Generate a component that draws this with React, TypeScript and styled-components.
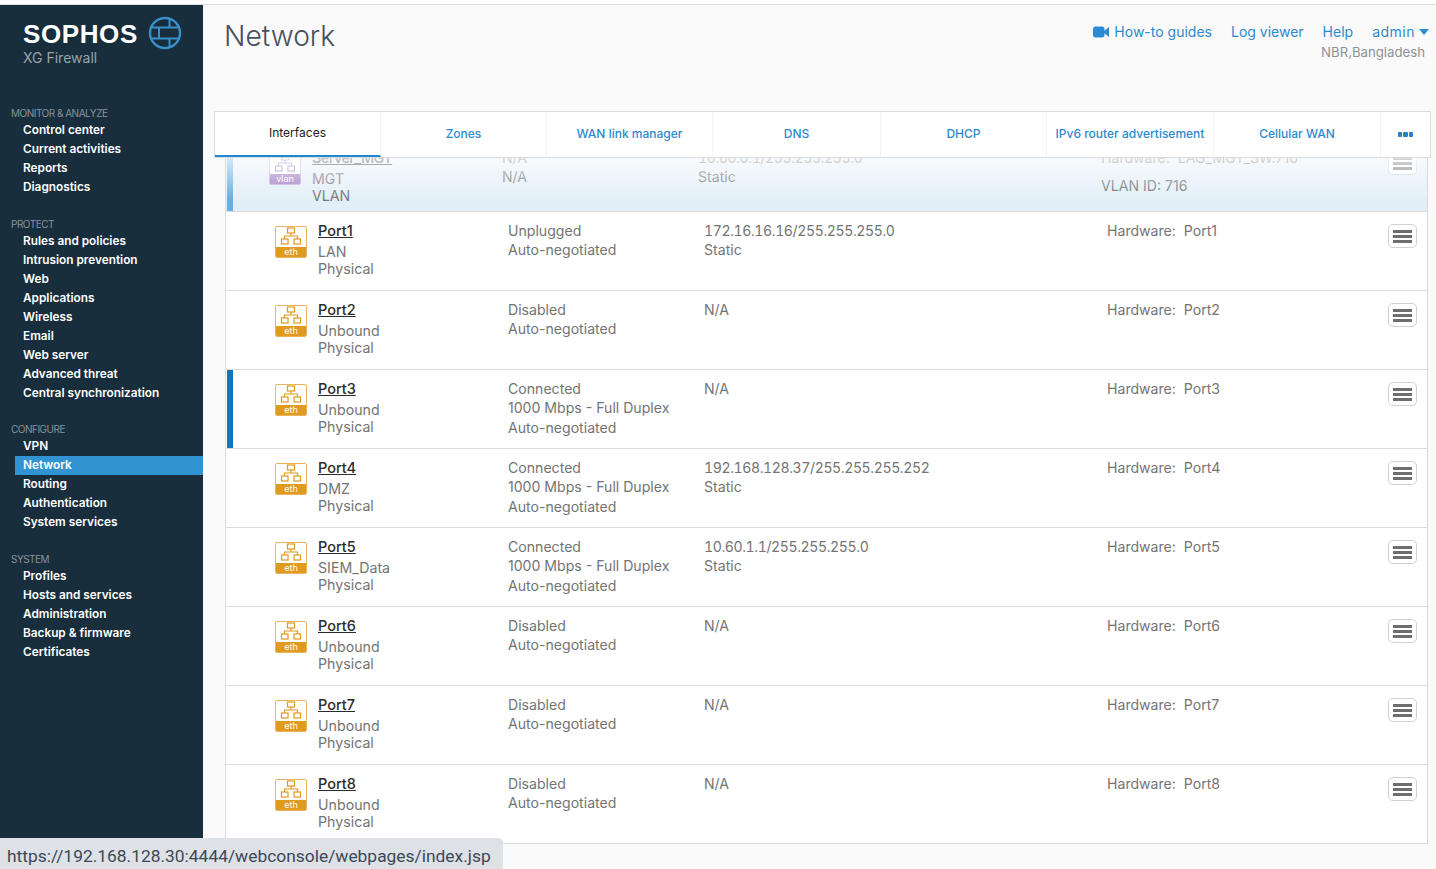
import React from 'react';
import styled, { createGlobalStyle } from 'styled-components';

const GlobalStyle = createGlobalStyle`
  html, body {
    margin: 0;
    padding: 0;
    height: 100%;
    overflow: hidden;
    background: #fff;
    font-family: Inter, "Noto Sans", sans-serif;
  }
  * { box-sizing: border-box; }
`;

const Page = styled.div`
  width: 1436px;
  height: 869px;
  padding-top: 4px;
  position: relative;
  overflow: hidden;
`;

const Shell = styled.div`
  display: flex;
  height: 865px;
  border-top: 1px solid #dcdfe2;
`;

const Sidebar = styled.nav`
  width: 203px;
  flex: none;
  background: #182e3d;
  color: #fff;
`;

const Brand = styled.div`
  height: 100px;
  padding: 10px 0 0 23px;
`;

const BrandRow = styled.div`
  display: flex;
  align-items: center;
  gap: 10px;
  height: 36px;
`;

const BrandName = styled.span`
  font-family: "Liberation Sans", sans-serif;
  font-weight: 700;
  font-size: 26px;
  letter-spacing: 0.6px;
  width: 115px;
  margin-top: 2px;
`;

const BrandSub = styled.div`
  font-size: 14px;
  color: #99a3aa;
  margin-top: -2px;
`;

const Group = styled.div`
  margin-bottom: 18.67px;
`;

const GroupLabel = styled.div`
  font-size: 10px;
  letter-spacing: -0.5px;
  line-height: 15px;
  padding-top: 1px;
  color: #88939a;
  padding-left: 11px;
  text-transform: uppercase;
`;

const NavItem = styled.div<{ $active?: boolean }>`
  margin-left: 15px;
  padding-left: 8px;
  height: 19px;
  line-height: 19px;
  font-size: 11.8px;
  font-weight: 600;
  white-space: nowrap;
  background: ${(p) => (p.$active ? '#3293d2' : 'transparent')};
`;

const Main = styled.main`
  flex: 1;
  min-width: 0;
  background: #fafafa;
  padding: 0 5px 0 11px;
`;

const Header = styled.header`
  height: 106px;
  display: flex;
  justify-content: space-between;
  padding: 12px 0 0 10px;
`;

const Title = styled.h1`
  margin: 0;
  font-size: 28.2px;
  font-weight: 300;
  line-height: 38px;
  color: #46525c;
`;

const HeaderSide = styled.div`
  display: flex;
  flex-direction: column;
  align-items: flex-end;
  padding: 5px 2px 0 0;
`;

const Links = styled.div`
  display: flex;
  align-items: center;
  gap: 19px;
  font-size: 14px;
  line-height: 20px;
  color: #2b8ad0;
`;

const LinkWithIcon = styled.span`
  display: inline-flex;
  align-items: center;
  gap: 4px;
`;

const AdminName = styled.span`
  letter-spacing: 0.5px;
`;

const Place = styled.div`
  font-size: 13.2px;
  line-height: 18px;
  color: #8a9299;
  margin: 1px 4px 0 0;
`;

const Tabs = styled.div`
  position: relative;
  z-index: 2;
  display: grid;
  grid-template-columns: 166px 166px 166px 168px 166px 167px 167px 1fr;
  height: 47px;
  background: #fff;
  border: 1px solid #dadcde;
`;

const Tab = styled.div<{ $active?: boolean }>`
  display: flex;
  align-items: center;
  justify-content: center;
  padding-bottom: 2px;
  font-size: 12px;
  font-weight: ${(p) => (p.$active ? 400 : 500)};
  white-space: nowrap;
  color: ${(p) => (p.$active ? '#222' : '#2b8ad0')};
  border-right: 1px solid #f3f3f3;
  border-bottom: ${(p) => (p.$active ? '2px solid #1e88d2' : '0')};
`;

const MoreDots = styled.div`
  display: flex;
  align-items: center;
  justify-content: center;
  gap: 1px;
`;

const Dot = styled.i`
  width: 4.6px;
  height: 4.6px;
  background: #2b7fc6;
  border-radius: 1px;
`;

const Table = styled.section`
  position: relative;
  margin: -19px 3px 0 11px;
  background: #fff;
  border-left: 1px solid #d9dbdd;
  border-right: 1px solid #d9dbdd;
`;

const Fade = styled.div`
  position: absolute;
  z-index: 1;
  left: 0;
  right: 0;
  top: 19px;
  height: 42px;
  background: linear-gradient(to bottom, rgba(255, 255, 255, 0.72), rgba(255, 255, 255, 0));
`;

const Row = styled.div<{ $first?: boolean }>`
  position: relative;
  display: grid;
  grid-template-columns: ${(p) => (p.$first ? '86px' : '92px')} 190px 196px 403px 1fr 10px;
  height: ${(p) => (p.$first ? '73px' : '79px')};
  padding-top: 8px;
  background: ${(p) => (p.$first ? '#e3eff8' : '#fff')};
  border-bottom: 1px solid #d9dbdd;
`;

const RowBar = styled.span<{ $soft?: boolean }>`
  position: absolute;
  left: 1px;
  top: 0;
  bottom: 0;
  width: 6px;
  background: ${(p) => (p.$soft ? '#68aee0' : '#0f75bd')};
`;

const IconCell = styled.div<{ $shift?: boolean }>`
  padding: 6px 0 0 ${(p) => (p.$shift ? '43px' : '49px')};
`;

const IconBox = styled.div<{ $color: string; $edge: string }>`
  width: 32px;
  height: 32px;
  border: 1px solid ${(p) => p.$edge};
  border-radius: 2px;
  background: #fff;
  display: flex;
  flex-direction: column;
  overflow: hidden;
  color: ${(p) => p.$color};
`;

const IconTop = styled.div`
  flex: 1;
  display: flex;
  align-items: center;
  justify-content: center;
`;

const IconLabel = styled.div<{ $color: string }>`
  height: 10px;
  line-height: 10px;
  background: ${(p) => p.$color};
  color: #fff;
  font-size: 9px;
  text-align: center;
`;

const NameCell = styled.div``;

const PortName = styled.div<{ $tight?: boolean }>`
  font-size: 14.5px;
  font-weight: 500;
  line-height: 22px;
  margin-bottom: 1px;
  letter-spacing: ${(p) => (p.$tight ? '-0.6px' : '0')};
  color: #2b2b2b;
  text-decoration: underline;
`;

const SubLine = styled.div`
  font-size: 14.2px;
  line-height: 17px;
  color: #747474;
  white-space: nowrap;
`;

const TextCell = styled.div`
  font-size: 14.1px;
  line-height: 19.5px;
  padding-top: 0.6px;
  color: #747474;
  white-space: nowrap;
`;

const AddressLine = styled.div<{ $ip?: boolean }>`
  font-variant-numeric: ${(p) => (p.$ip ? 'tabular-nums' : 'normal')};
  letter-spacing: ${(p) => (p.$ip ? '-0.42px' : '0')};
`;

const VlanLine = styled.div`
  margin-top: 9px;
`;

const MenuButton = styled.button`
  width: 29px;
  height: 24px;
  margin: 4px 0 0 -29px;
  padding: 0;
  background: #fff;
  border: 1px solid #cfd1d3;
  border-radius: 5px;
  display: flex;
  flex-direction: column;
  align-items: center;
  justify-content: center;
  gap: 2px;
`;

const MenuBar = styled.i`
  width: 19px;
  height: 3px;
  background: #6e6e6e;
`;

const StatusBar = styled.div`
  position: absolute;
  z-index: 5;
  left: 0;
  bottom: 0;
  width: 503px;
  height: 31px;
  padding: 8px 0 0 7px;
  background: #dee1e6;
  border-top-right-radius: 5px;
  font-family: Roboto, sans-serif;
  font-size: 17.4px;
  line-height: 20px;
  color: #3c4858;
  white-space: nowrap;
`;

const navGroups = [
  { label: 'Monitor & analyze', items: ['Control center', 'Current activities', 'Reports', 'Diagnostics'] },
  {
    label: 'Protect',
    items: ['Rules and policies', 'Intrusion prevention', 'Web', 'Applications', 'Wireless', 'Email', 'Web server', 'Advanced threat', 'Central synchronization'],
  },
  { label: 'Configure', items: ['VPN', 'Network', 'Routing', 'Authentication', 'System services'] },
  { label: 'System', items: ['Profiles', 'Hosts and services', 'Administration', 'Backup & firmware', 'Certificates'] },
];

const tabs = ['Interfaces', 'Zones', 'WAN link manager', 'DNS', 'DHCP', 'IPv6 router advertisement', 'Cellular WAN'];

type Port = { name: string; zone: string; status: string[]; ip: string[]; hardware: string; bar?: boolean };

const AUTO = 'Auto-negotiated';
const FULL = '1000 Mbps - Full Duplex';

const ports: Port[] = [
  { name: 'Port1', zone: 'LAN', status: ['Unplugged', AUTO], ip: ['172.16.16.16/255.255.255.0', 'Static'], hardware: 'Port1' },
  { name: 'Port2', zone: 'Unbound', status: ['Disabled', AUTO], ip: ['N/A'], hardware: 'Port2' },
  { name: 'Port3', zone: 'Unbound', status: ['Connected', FULL, AUTO], ip: ['N/A'], hardware: 'Port3', bar: true },
  { name: 'Port4', zone: 'DMZ', status: ['Connected', FULL, AUTO], ip: ['192.168.128.37/255.255.255.252', 'Static'], hardware: 'Port4' },
  { name: 'Port5', zone: 'SIEM_Data', status: ['Connected', FULL, AUTO], ip: ['10.60.1.1/255.255.255.0', 'Static'], hardware: 'Port5' },
  { name: 'Port6', zone: 'Unbound', status: ['Disabled', AUTO], ip: ['N/A'], hardware: 'Port6' },
  { name: 'Port7', zone: 'Unbound', status: ['Disabled', AUTO], ip: ['N/A'], hardware: 'Port7' },
  { name: 'Port8', zone: 'Unbound', status: ['Disabled', AUTO], ip: ['N/A'], hardware: 'Port8' },
];

const Globe = () => (
  <svg width="34" height="34" viewBox="0 0 34 34" fill="none" stroke="#3a8fc9" strokeWidth="2.4">
    <circle cx="17" cy="17" r="15" />
    <path d="M4 11.5h26M4 22.5h26M11 11.5v11M21.5 2v9.5M21.5 22.5V32" strokeWidth="2" />
  </svg>
);

const NetworkGlyph = () => (
  <svg width="22" height="20" viewBox="0 0 22 20" fill="none" stroke="currentColor" strokeWidth="1.2">
    <rect x="7.5" y="1" width="7" height="5" />
    <path d="M11 6v3M4.5 12V9h13v3" />
    <rect x="1.5" y="12" width="6.5" height="5" />
    <rect x="14" y="12" width="6.5" height="5" />
  </svg>
);

const PortIcon = ({ label, color, edge }: { label: string; color: string; edge: string }) => (
  <IconBox $color={color} $edge={edge}>
    <IconTop>
      <NetworkGlyph />
    </IconTop>
    <IconLabel $color={color}>{label}</IconLabel>
  </IconBox>
);

const Hamburger = () => (
  <MenuButton aria-label="menu">
    <MenuBar />
    <MenuBar />
    <MenuBar />
  </MenuButton>
);

const isAddress = (s: string) => /\d/.test(s);

export default function App() {
  return (
    <Page>
      <GlobalStyle />
      <Shell>
        <Sidebar>
          <Brand>
            <BrandRow>
              <BrandName>SOPHOS</BrandName>
              <Globe />
            </BrandRow>
            <BrandSub>XG Firewall</BrandSub>
          </Brand>
          {navGroups.map((g) => (
            <Group key={g.label}>
              <GroupLabel>{g.label}</GroupLabel>
              {g.items.map((i) => (
                <NavItem key={i} $active={i === 'Network'}>
                  {i}
                </NavItem>
              ))}
            </Group>
          ))}
        </Sidebar>
        <Main>
          <Header>
            <Title>Network</Title>
            <HeaderSide>
              <Links>
                <LinkWithIcon>
                  <svg width="17" height="12" viewBox="0 0 17 12" fill="#2b8ad0">
                    <rect x="0" y="0.5" width="11.5" height="11" rx="2.5" />
                    <path d="M11 5l5-4v10l-5-4z" />
                  </svg>
                  How-to guides
                </LinkWithIcon>
                <span>Log viewer</span>
                <span>Help</span>
                <LinkWithIcon>
                  <AdminName>admin</AdminName>
                  <svg width="10" height="6" viewBox="0 0 10 6" fill="#2b8ad0">
                    <path d="M0 0h10L5 6z" />
                  </svg>
                </LinkWithIcon>
              </Links>
              <Place>NBR,Bangladesh</Place>
            </HeaderSide>
          </Header>
          <Tabs>
            {tabs.map((t) => (
              <Tab key={t} $active={t === 'Interfaces'}>
                {t}
              </Tab>
            ))}
            <MoreDots>
              <Dot />
              <Dot />
              <Dot />
            </MoreDots>
          </Tabs>
          <Table>
            <Fade />
            <Row $first>
              <RowBar $soft />
              <IconCell $shift>
                <PortIcon label="vlan" color="#a07cc5" edge="#c3a9dc" />
              </IconCell>
              <NameCell>
                <PortName $tight>Server_MGT</PortName>
                <SubLine>MGT</SubLine>
                <SubLine>VLAN</SubLine>
              </NameCell>
              <TextCell>
                <div>N/A</div>
                <div>N/A</div>
              </TextCell>
              <TextCell>
                <AddressLine $ip>10.60.0.1/255.255.255.0</AddressLine>
                <AddressLine>Static</AddressLine>
              </TextCell>
              <TextCell>
                <div>Hardware:&nbsp; LAG_MGT_SW.716</div>
                <VlanLine>VLAN ID: 716</VlanLine>
              </TextCell>
              <Hamburger />
            </Row>
            {ports.map((p) => (
              <Row key={p.name}>
                {p.bar && <RowBar />}
                <IconCell>
                  <PortIcon label="eth" color="#e09a1f" edge="#e9b45e" />
                </IconCell>
                <NameCell>
                  <PortName>{p.name}</PortName>
                  <SubLine>{p.zone}</SubLine>
                  <SubLine>Physical</SubLine>
                </NameCell>
                <TextCell>
                  {p.status.map((s) => (
                    <div key={s}>{s}</div>
                  ))}
                </TextCell>
                <TextCell>
                  {p.ip.map((s) => (
                    <AddressLine key={s} $ip={isAddress(s)}>
                      {s}
                    </AddressLine>
                  ))}
                </TextCell>
                <TextCell>Hardware:&nbsp; {p.hardware}</TextCell>
                <Hamburger />
              </Row>
            ))}
          </Table>
        </Main>
      </Shell>
      <StatusBar>https://192.168.128.30:4444/webconsole/webpages/index.jsp</StatusBar>
    </Page>
  );
}
